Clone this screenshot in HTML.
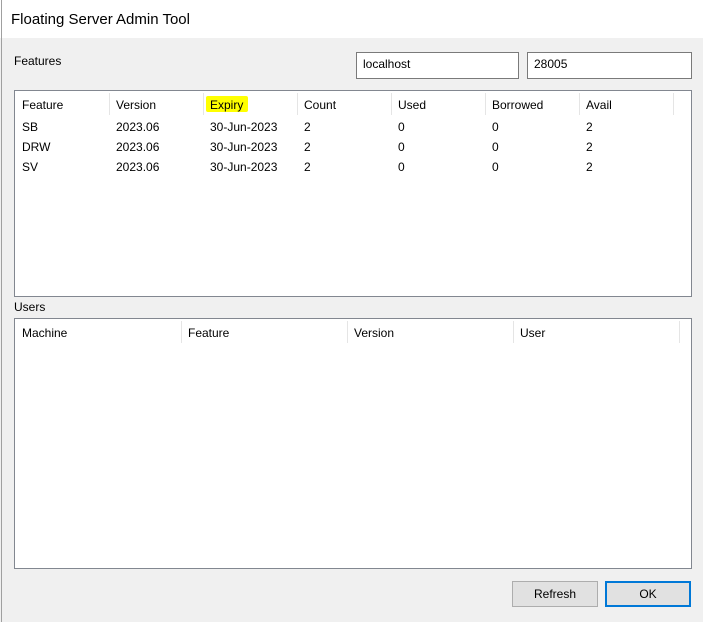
<!DOCTYPE html><html><head><style>
body{margin:0;width:703px;height:622px;background:#f0f0f0;position:relative;overflow:hidden;font-family:"Liberation Sans",sans-serif;font-size:12px;color:#000}
.a{position:absolute}
.box{position:absolute;background:#fff;border:1px solid #828790;box-sizing:border-box}
.tb{position:absolute;background:#fff;border:1px solid #7a7a7a;box-sizing:border-box;padding:4px 0 0 6px}
.sep{position:absolute;top:2px;width:1px;height:22px;background:#e5e5e5}
.btn{position:absolute;background:#e1e1e1;border:1px solid #adadad;box-sizing:border-box;text-align:center;line-height:25px}
</style></head><body>
<div class="a" style="left:0;top:0;width:703px;height:38px;background:#fff"></div>
<div class="a" style="left:1px;top:0;width:1px;height:622px;background:#a0a0a0"></div>
<div class="a" style="left:11px;top:11px;font-size:15px">Floating Server Admin Tool</div>
<div class="a" style="left:14px;top:54px">Features</div>
<div class="tb" style="left:356px;top:52px;width:163px;height:27px">localhost</div>
<div class="tb" style="left:527px;top:52px;width:165px;height:27px">28005</div>
<div class="box" style="left:14px;top:90px;width:678px;height:207px">
<div class="sep" style="left:94px"></div><div class="sep" style="left:188px"></div><div class="sep" style="left:282px"></div><div class="sep" style="left:376px"></div><div class="sep" style="left:470px"></div><div class="sep" style="left:564px"></div><div class="sep" style="left:658px"></div>
<div class="a" style="left:191px;top:5px;width:42px;height:16px;background:#ffff00;border-radius:2px"></div>
<div class="a" style="left:7px;top:7px">Feature</div><div class="a" style="left:101px;top:7px">Version</div><div class="a" style="left:195px;top:7px">Expiry</div><div class="a" style="left:289px;top:7px">Count</div><div class="a" style="left:383px;top:7px">Used</div><div class="a" style="left:477px;top:7px">Borrowed</div><div class="a" style="left:571px;top:7px">Avail</div>
<div class="a" style="left:7px;top:26px;line-height:20px">SB<br>DRW<br>SV</div>
<div class="a" style="left:101px;top:26px;line-height:20px">2023.06<br>2023.06<br>2023.06</div>
<div class="a" style="left:195px;top:26px;line-height:20px">30-Jun-2023<br>30-Jun-2023<br>30-Jun-2023</div>
<div class="a" style="left:289px;top:26px;line-height:20px">2<br>2<br>2</div>
<div class="a" style="left:383px;top:26px;line-height:20px">0<br>0<br>0</div>
<div class="a" style="left:477px;top:26px;line-height:20px">0<br>0<br>0</div>
<div class="a" style="left:571px;top:26px;line-height:20px">2<br>2<br>2</div>
</div>
<div class="a" style="left:14px;top:300px">Users</div>
<div class="box" style="left:14px;top:318px;width:678px;height:251px">
<div class="sep" style="left:166px"></div><div class="sep" style="left:332px"></div><div class="sep" style="left:498px"></div><div class="sep" style="left:664px"></div>
<div class="a" style="left:7px;top:7px">Machine</div><div class="a" style="left:173px;top:7px">Feature</div><div class="a" style="left:339px;top:7px">Version</div><div class="a" style="left:505px;top:7px">User</div>
</div>
<div class="btn" style="left:512px;top:581px;width:86px;height:26px">Refresh</div>
<div class="btn" style="left:605px;top:581px;width:86px;height:26px;border:2px solid #0078d7;line-height:23px">OK</div>
</body></html>
